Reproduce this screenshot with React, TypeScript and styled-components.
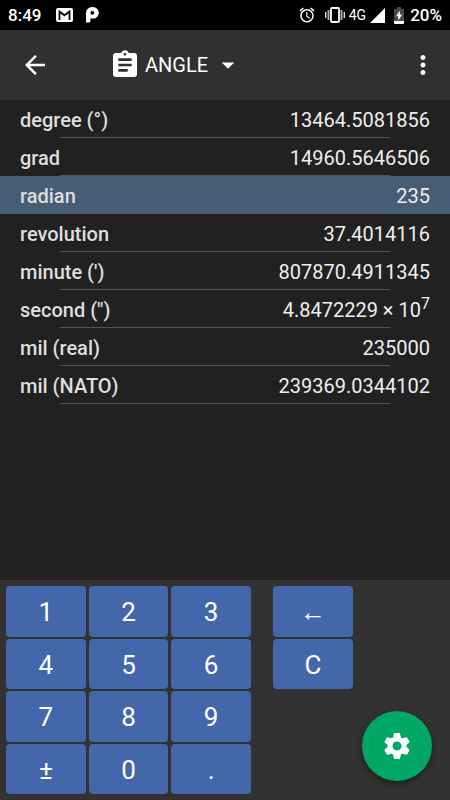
import React, { useState } from "react";
import styled, { createGlobalStyle } from "styled-components";
import {
  MdAlarm,
  MdArrowBack,
  MdArrowDropDown,
  MdAssignment,
  MdMoreVert,
} from "react-icons/md";

const GlobalStyle = createGlobalStyle`
  *, *::before, *::after { box-sizing: border-box; }
  body {
    margin: 0;
    background: #212121;
    font-family: Roboto, "Liberation Sans", sans-serif;
  }
  button {
    margin: 0;
    padding: 0;
    border: 0;
    background: none;
    color: inherit;
    font: inherit;
    cursor: pointer;
  }
`;

const Screen = styled.div`
  display: flex;
  flex-direction: column;
  min-height: 100vh;
  background: #212121;
  color: #ffffff;
`;

const StatusBar = styled.div`
  display: flex;
  align-items: center;
  justify-content: space-between;
  height: 30px;
  padding: 0 8px;
  background: #000000;
  font-size: 17px;
  font-weight: 500;
`;

const StatusGroup = styled.div<{ $gap: number }>`
  display: flex;
  align-items: center;
  gap: ${(p) => p.$gap}px;
`;

const Clock = styled.time`
  margin-right: 2px;
`;

const Signal = styled.div`
  display: flex;
  align-items: center;
  gap: 4px;
  font-size: 14px;
  font-weight: 400;
`;

const Battery = styled.div`
  display: flex;
  align-items: center;
  gap: 6px;
`;

const AppBar = styled.header`
  display: flex;
  align-items: center;
  height: 70px;
  padding: 0 12px 0 20px;
  background: #303030;
`;

const IconButton = styled.button`
  display: flex;
  align-items: center;
  justify-content: center;
  width: 30px;
  height: 48px;
`;

const CategoryButton = styled.button`
  display: flex;
  align-items: center;
  height: 48px;
  margin: 0 auto 0 59px;
  font-size: 20px;
`;

const CategoryName = styled.span`
  margin: 0 5px 0 4px;
`;

const Results = styled.main`
  flex: 1;
`;

const UnitTable = styled.table`
  width: 100%;
  border-collapse: collapse;
  font-size: 20px;
`;

const UnitRow = styled.tr<{ $selected: boolean }>`
  position: relative;
  height: 38px;
  background: ${(p) => (p.$selected ? "#465d75" : "transparent")};
  cursor: pointer;

  &::after {
    content: "";
    position: absolute;
    right: 60px;
    bottom: 0;
    left: 60px;
    height: 1px;
    background: ${(p) => (p.$selected ? "#5b5652" : "#525252")};
  }
`;

const UnitName = styled.th`
  padding: 1px 0 0 20px;
  color: #dedede;
  font-weight: 500;
  line-height: 24px;
  text-align: left;
`;

const UnitValue = styled.td`
  padding: 1px 20px 0 0;
  color: #eeeeee;
  line-height: 24px;
  text-align: right;
`;

const Exponent = styled.sup`
  font-size: 16px;
  line-height: 0;
`;

const Keypad = styled.section`
  position: relative;
  display: grid;
  grid-template-columns: 245fr 80fr 69fr;
  column-gap: 22px;
  padding: 6px;
  background: #323232;
`;

const KeyGrid = styled.div<{ $columns: number }>`
  display: grid;
  grid-template-columns: repeat(${(p) => p.$columns}, 1fr);
  grid-template-rows: repeat(4, 1fr);
  gap: 2px 3px;
  height: 208px;
`;

const Key = styled.button`
  padding-top: 2px;
  border-radius: 4px;
  background: #4467ab;
  font-size: 26px;
  line-height: 30px;
`;

const SettingsButton = styled.button`
  position: absolute;
  right: 18px;
  bottom: 19px;
  display: flex;
  align-items: center;
  justify-content: center;
  width: 70px;
  height: 70px;
  border-radius: 50%;
  background: #00a766;
  box-shadow: 0 3px 6px rgba(0, 0, 0, 0.4);
`;

const MailIcon = () => (
  <svg width="17" height="14" viewBox="0 0 17 14" aria-hidden="true">
    <rect width="17" height="14" rx="2" fill="#fff" />
    <path d="M3.5 12V3.5l5 3.8 5-3.8V12" fill="none" stroke="#000" strokeWidth="1.8" />
  </svg>
);

const ParkingIcon = () => (
  <svg width="13" height="16" viewBox="0 0 13 16" aria-hidden="true">
    <path
      d="M0 6A6 6 0 0 1 6 0H7A5.7 5.7 0 0 1 7 11.6H4.4V14a1.6 1.6 0 0 1-1.6 1.6H0z"
      fill="#fff"
    />
    <circle cx="6.3" cy="5.8" r="1.9" fill="#000" />
  </svg>
);

const VibrateIcon = () => (
  <svg width="20" height="16" viewBox="0 0 20 16" aria-hidden="true">
    <rect x="6" y="1" width="8" height="14" rx="1" fill="none" stroke="#fff" strokeWidth="1.8" />
    <path d="M3.5 3v10M16.5 3v10" stroke="#aaa" strokeWidth="2" />
    <path d="M.7 5v6M19.3 5v6" stroke="#ddd" strokeWidth="1.4" />
  </svg>
);

const SignalIcon = () => (
  <svg width="15" height="15" viewBox="0 0 15 15" aria-hidden="true">
    <path d="M15 0v15H0z" fill="#fff" />
  </svg>
);

const BatteryIcon = () => (
  <svg width="10" height="17" viewBox="0 0 10 17" aria-hidden="true">
    <path d="M3 0h4v2h3v12H0V2h3z" fill="#484848" />
    <path d="M0 14h10v2a1 1 0 0 1-1 1H1a1 1 0 0 1-1-1z" fill="#fff" />
    <path d="M5.8 3.5v4h2.4L4.2 13.5V9.3H2z" fill="#fff" />
  </svg>
);

const GearIcon = () => (
  <svg width="26" height="26" viewBox="-13 -13 26 26" aria-hidden="true">
    <circle r="7" fill="none" stroke="#fff" strokeWidth="5" />
    {[0, 60, 120, 180, 240, 300].map((angle) => (
      <path
        key={angle}
        d="M-4 -8L-3 -12.4Q-2.9 -13 -2.3 -13H2.3Q2.9 -13 3 -12.4L4 -8z"
        fill="#fff"
        transform={`rotate(${angle})`}
      />
    ))}
  </svg>
);

type Unit = { name: string; value: string; exponent?: string };

const units: Unit[] = [
  { name: "degree (°)", value: "13464.5081856" },
  { name: "grad", value: "14960.5646506" },
  { name: "radian", value: "235" },
  { name: "revolution", value: "37.4014116" },
  { name: "minute (')", value: "807870.4911345" },
  { name: "second (\")", value: "4.8472229 × 10", exponent: "7" },
  { name: "mil (real)", value: "235000" },
  { name: "mil (NATO)", value: "239369.0344102" },
];

const digitKeys = ["1", "2", "3", "4", "5", "6", "7", "8", "9", "±", "0", "."];

export default function App() {
  const [selected, setSelected] = useState("radian");

  return (
    <>
      <GlobalStyle />
      <Screen>
        <StatusBar>
          <StatusGroup $gap={13}>
            <Clock>8:49</Clock>
            <MailIcon />
            <ParkingIcon />
          </StatusGroup>
          <StatusGroup $gap={9}>
            <MdAlarm size={18} />
            <Signal>
              <VibrateIcon />
              <span>4G</span>
              <SignalIcon />
            </Signal>
            <Battery>
              <BatteryIcon />
              <span>20%</span>
            </Battery>
          </StatusGroup>
        </StatusBar>

        <AppBar>
          <IconButton aria-label="Back">
            <MdArrowBack size={30} />
          </IconButton>
          <CategoryButton aria-haspopup="listbox">
            <MdAssignment size={32} />
            <CategoryName>ANGLE</CategoryName>
            <MdArrowDropDown size={30} />
          </CategoryButton>
          <IconButton aria-label="More options">
            <MdMoreVert size={30} />
          </IconButton>
        </AppBar>

        <Results>
          <UnitTable>
            <tbody>
              {units.map((unit) => (
                <UnitRow
                  key={unit.name}
                  $selected={unit.name === selected}
                  onClick={() => setSelected(unit.name)}
                >
                  <UnitName scope="row">{unit.name}</UnitName>
                  <UnitValue>
                    {unit.value}
                    {unit.exponent && <Exponent>{unit.exponent}</Exponent>}
                  </UnitValue>
                </UnitRow>
              ))}
            </tbody>
          </UnitTable>
        </Results>

        <Keypad aria-label="Keypad">
          <KeyGrid $columns={3}>
            {digitKeys.map((label) => (
              <Key key={label}>{label}</Key>
            ))}
          </KeyGrid>
          <KeyGrid $columns={1}>
            <Key aria-label="Backspace">←</Key>
            <Key aria-label="Clear">C</Key>
          </KeyGrid>
          <SettingsButton aria-label="Settings">
            <GearIcon />
          </SettingsButton>
        </Keypad>
      </Screen>
    </>
  );
}
